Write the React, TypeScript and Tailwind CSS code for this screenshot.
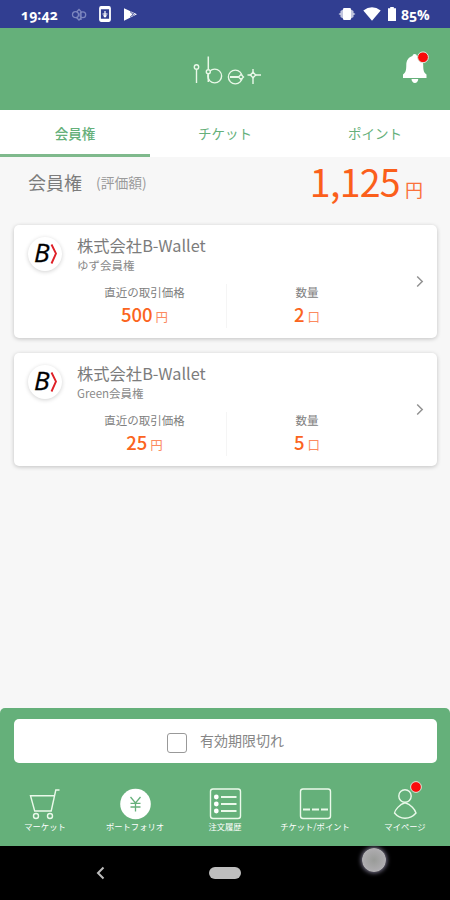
import type { ReactNode } from 'react';

const tabs = ['会員権', 'チケット', 'ポイント'];

const holdings = [
  { id: 1, company: '株式会社B-Wallet', name: 'ゆず会員権', price: '500', amount: '2' },
  { id: 2, company: '株式会社B-Wallet', name: 'Green会員権', price: '25', amount: '5' },
];

function StatusBar() {
  return (
    <div className="flex h-7 shrink-0 items-center bg-[#313e91] pl-[21px] pr-5 font-['Open_Sans',sans-serif] text-[14px] font-bold text-white">
      <span className="w-[38px] whitespace-nowrap oldstyle-nums tracking-[0.1px]">19:42</span>
      <svg className="ml-3 h-4 w-4" viewBox="0 0 16 16" fill="none" stroke="#7c86bf" strokeWidth="1.3">
        <path d="M5.500 11.500 8 14l2.500-2.500M5.500 6 8 3.500l2 2V14" />
        <circle cx="4.500" cy="8.700" r="3" />
        <circle cx="11.800" cy="8.700" r="2.900" />
      </svg>
      <svg className="ml-3 h-4 w-3" viewBox="0 0 12 16" fill="none" stroke="white">
        <rect x="1" y="1" width="10" height="14" rx="1.2" strokeWidth="1.8" />
        <path d="M1 2h10M1 14h10" strokeWidth="2.6" />
        <path d="M6 5v5M3.500 8h5M4.500 9.300 6 10.800l1.500-1.500" strokeWidth="1.2" />
      </svg>
      <svg className="ml-3 h-[15px] w-[15px]" viewBox="0 0 15 15">
        <path d="M1 1.200 14 7.300 1 13.700Z" fill="white" />
        <path d="m7 4.500 3 2.900-3 2.900M9.500 5.700l1.700 1.700-1.700 1.700" fill="none" stroke="#313e91" strokeWidth=".9" />
      </svg>
      <div className="ml-auto flex items-center">
        <svg className="h-3 w-[18px]" viewBox="0 0 18 12" fill="white">
          <rect x="5" y="0" width="8" height="12" rx="1.200" />
          <path d="M5 1.500v9L2.500 9V7.200L.5 6l2-1.200V3ZM13 1.500v9l2.500-1.500V7.200l2-1.200-2-1.200V3Z" opacity=".7" />
        </svg>
        <svg className="ml-[7px] h-[14px] w-[18px]" viewBox="0 0 18 14" fill="white">
          <path d="M.3 3.500Q9-3 17.700 3.500L9 13.800Z" />
        </svg>
        <svg className="ml-[7px] h-[14px] w-2" viewBox="0 0 8 14" fill="white">
          <path d="M2.200 0h3.600v1.200H8V14H0V1.200h2.200Z" />
        </svg>
        <span className="ml-[5px] w-[29px] whitespace-nowrap oldstyle-nums tracking-[-0.1px]">85%</span>
      </div>
    </div>
  );
}

function Logo() {
  return (
    <svg className="h-[32px] w-[72px]" viewBox="0 0 72 32" fill="none" stroke="#e9f8e8" strokeWidth="1.4">
      {/* i */}
      <circle cx="7.500" cy="14" r="2.200" />
      <path d="M7.500 16.500V30" />
      {/* b */}
      <circle cx="25.700" cy="23" r="6.900" />
      <path d="M19.300 3.500v13M19.300 21v8" strokeWidth="1.500" />
      <circle cx="19.300" cy="18.700" r="2" fill="#65b07a" />
      {/* e */}
      <circle cx="46.300" cy="24" r="6.900" />
      <path d="M41 24h9" strokeWidth="2" />
      <path d="m52 21.500 2.500 2.500-2.500 2.500-2.500-2.500Z" fill="#65b07a" />
      {/* t */}
      <path d="M64 16v4M64 24V31M58.500 22h4M66 22h6" />
      <path d="m64 19.300 2.700 2.700-2.700 2.700-2.700-2.700Z" />
    </svg>
  );
}

function Header() {
  return (
    <header className="relative flex h-[82px] shrink-0 items-center justify-center bg-[#65b07a]">
      <div className="pb-px">
        <Logo />
      </div>
      <button className="absolute left-[402px] top-[23px]">
        <svg className="h-[36px] w-[30px]" viewBox="0 0 30 36" fill="white">
          <path d="M12.700 3c1.200 0 2 .7 2.200 1.900 4 1 6.300 4.400 6.300 8.900 0 6 .8 8 3.300 9.700V27H1v-3.500c2.500-1.700 3.300-3.700 3.300-9.700 0-4.500 2.300-7.900 6.200-8.900C10.700 3.700 11.500 3 12.700 3Z" />
          <path d="M9.500 28h6.700c0 2.200-1.400 4-3.300 4s-3.400-1.800-3.400-4Z" />
          <circle cx="21" cy="6.300" r="5.400" fill="#f90b0b" stroke="#d9eadc" />
        </svg>
      </button>
    </header>
  );
}

function BWalletIcon() {
  return (
    <div className="flex h-[34px] w-[34px] items-center justify-center rounded-full bg-white shadow-[0_1px_4px_rgba(0,0,0,0.18)]">
      <span className="ml-px w-[15px] pb-[3px] text-[26px] italic leading-[31px] text-black [-webkit-text-stroke:0.3px_black] font-['Open_Sans',sans-serif]">
        B
      </span>
      <svg className="ml-px h-[22px] w-[7px]" viewBox="0 0 7 22" fill="none" stroke="#df2027" strokeWidth="1.9">
        <path d="M1.500 1.500 6 10.500l-4.500 10" />
      </svg>
    </div>
  );
}

function HoldingCard({ company, name, price, amount }: { company: string; name: string; price: string; amount: string }) {
  return (
    <div className="flex h-[113px] rounded-[5px] bg-white pl-[14px] shadow-[0_1px_4px_rgba(0,0,0,0.22)]">
      <div className="w-[49px] pt-[12px]">
        <BWalletIcon />
      </div>
      <div className="w-[311px] pt-[9px]">
        <p className="h-[23px] text-[16.300px] leading-[23px] text-[#7c7c7c]">{company}</p>
        <p className="h-4 text-[11.500px] leading-4 text-[#8a8a8a]">{name}</p>
        <div className="mt-[11px] flex h-[44px]">
          <div className="w-[150px] border-r border-[#f5f5f5] pr-[14px] text-center">
            <p className="text-[11.500px] leading-4 text-[#808080]">直近の取引価格</p>
            <p className="whitespace-nowrap leading-[28px] text-[#fb6420]">
              <span className="text-[18.500px] font-medium">{price}</span>
              <span className="ml-[3px] text-[12.500px] text-[#fc8a60]">円</span>
            </p>
          </div>
          <div className="w-[160px] text-center">
            <p className="text-[11.500px] leading-4 text-[#808080]">数量</p>
            <p className="whitespace-nowrap leading-[28px] text-[#fb6420]">
              <span className="text-[18.500px] font-medium">{amount}</span>
              <span className="ml-[3px] text-[12.500px] text-[#fc8a60]">口</span>
            </p>
          </div>
        </div>
      </div>
      <div className="flex flex-1 items-center pl-[28px]">
        <svg className="h-[13px] w-[8px]" viewBox="0 0 8 13" fill="none" stroke="#929292" strokeWidth="1.5">
          <path d="m1.200 1.500 5 5-5 5" />
        </svg>
      </div>
    </div>
  );
}

function NavItem({ label, children }: { label: string; children: ReactNode }) {
  return (
    <button className="flex w-[90px] flex-col items-center">
      <svg className="h-[38px] w-[38px] overflow-visible" viewBox="0 0 38 38" fill="none" stroke="#eaf9ea" strokeWidth="1.4">
        {children}
      </svg>
      <span className="-mt-px whitespace-nowrap text-[8.300px] leading-[12px] text-white">{label}</span>
    </button>
  );
}

function BottomNav() {
  return (
    <nav className="flex pt-[20px]">
      <NavItem label="マーケット">
        <path d="M33.500 7h-3.700l-4.600 21H8.700L4.500 12.800h24" />
        <circle cx="10" cy="33" r="2.500" />
        <circle cx="24" cy="33" r="2.500" />
      </NavItem>
      <NavItem label="ポートフォリオ">
        <circle cx="19.500" cy="21" r="15.300" fill="white" stroke="none" />
        <path d="m14.500 14 5 6 5-6M19.500 20v8.500M14.500 20.300h10M14.500 24h10" stroke="#65b07a" strokeWidth="1.300" />
      </NavItem>
      <NavItem label="注文履歴">
        <rect x="4.500" y="6" width="30" height="29.500" rx="2.500" />
        <g fill="white" stroke="none">
          <circle cx="10.300" cy="14" r="2.400" />
          <circle cx="10.300" cy="21" r="2.400" />
          <circle cx="10.300" cy="28" r="2.400" />
        </g>
        <path d="M15 14h15.500M15 21h15.500M15 28h15.500" strokeWidth="2.200" />
      </NavItem>
      <NavItem label="チケット/ポイント">
        <rect x="4.500" y="6" width="30" height="29.500" rx="2.500" />
        <path d="M7 26.500h7M16 26.500h7M25 26.500h7" strokeWidth="2.200" />
      </NavItem>
      <NavItem label="マイページ">
        <circle cx="19" cy="13" r="6.200" />
        <path d="M19 19.800c-5.500 1.500-10 7.300-10.500 10.200C11 33 14.500 35.200 19 35.200s8.500-2.200 11-5.200C29 27 25 21.300 19 19.800Z" />
        <circle cx="30" cy="4" r="5.400" fill="#f90b0b" stroke="#d9eadc" strokeWidth="1" />
      </NavItem>
    </nav>
  );
}

export default function App() {
  return (
    <div className="flex h-[900px] w-[450px] flex-col overflow-hidden bg-[#f7f7f7] font-['Noto_Sans_CJK_JP',sans-serif]">
      <StatusBar />
      <Header />

      {/* Tabs */}
      <div className="flex h-[47px] shrink-0 bg-white">
        {tabs.map((tab, index) => (
          <button
            key={tab}
            className={`w-[150px] border-b-[3px] pt-[2px] text-[13.500px] text-[#65b07a] ${
              index === 0 ? 'border-[#7fb98c] font-medium' : 'border-transparent'
            }`}
          >
            {tab}
          </button>
        ))}
      </div>

      {/* Total value */}
      <div className="flex h-[68px] items-start justify-between pl-[28px] pr-[27px]">
        <div className="flex pt-[12px] leading-[26px] text-[#7c7c7c]">
          <span className="text-[18px]">会員権</span>
          <span className="ml-[14px] text-[13.800px] text-[#9b9b9b]">(評価額)</span>
        </div>
        <p className="whitespace-nowrap leading-[48px] text-[#fb5f1b]">
          <span className="text-[37.500px] tracking-[-0.700px]">1,125</span>
          <span className="ml-[5px] text-[18px] text-[#fb713a]">円</span>
        </p>
      </div>

      {/* Holdings */}
      <div className="flex flex-1 flex-col gap-[15px] pl-[14px] pr-[13px]">
        {holdings.map((item) => (
          <HoldingCard key={item.id} company={item.company} name={item.name} price={item.price} amount={item.amount} />
        ))}
      </div>

      <div className="h-[138px] shrink-0 rounded-t-[5px] bg-[#65b07a] pt-[11px]">
        <label className="ml-[14px] flex h-[44px] w-[423px] items-center rounded-[5px] bg-white pl-[153px] text-[14px] text-[#868686]">
          <span className="mt-[4px] h-[20px] w-[20px] rounded-[3px] border-[1.500px] border-[#999]" />
          <span className="ml-[13px] pb-px">有効期限切れ</span>
        </label>
        <BottomNav />
      </div>

      {/* Android system bar */}
      <div className="relative flex h-[54px] shrink-0 items-center justify-center bg-black">
        <svg className="absolute left-[95px] top-[20px] h-[14px] w-[10px]" viewBox="0 0 10 14" fill="none" stroke="#bcbcbc" strokeWidth="2">
          <path d="M8.500 1.500 3 7l5.500 5.500" />
        </svg>
        <div className="h-3 w-8 rounded-full bg-[#bebebe]" />
        <div className="absolute left-[362px] top-[2px] h-[24px] w-[24px] rounded-full bg-[radial-gradient(circle,#999b98_0%,#aaa9ab_55%,#bfbdc5_100%)] shadow-[0_0_4px_1px_#77738a]" />
      </div>
    </div>
  );
}
